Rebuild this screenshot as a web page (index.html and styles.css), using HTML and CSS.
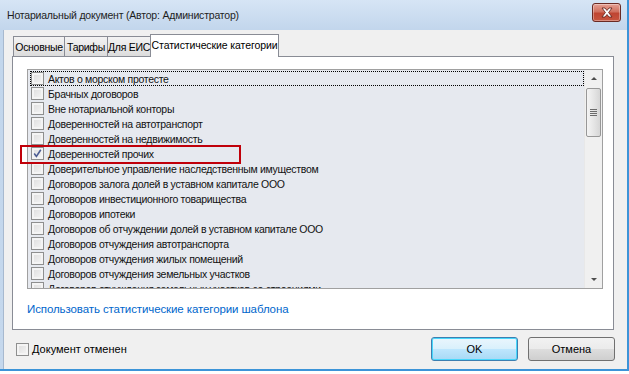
FILE: index.html
```html
<!DOCTYPE html>
<html lang="ru">
<head>
  <meta charset="UTF-8" />
  <title>Нотариальный документ</title>
  <link rel="stylesheet" href="styles.css">
</head>
<body>
  <div class="window">
    <div class="titlebar">
      <div class="title">Нотариальный документ (Автор: Администратор)</div>
      <div class="close-btn">
        <svg width="14" height="11" viewBox="0 0 14 11">
          <path d="M2 1 L5 1 L7 3.5 L9 1 L12 1 L8.6 5.5 L12 10 L9 10 L7 7.5 L5 10 L2 10 L5.4 5.5 Z" fill="#fff" stroke="#5a1a14" stroke-width="0.8"/>
        </svg>
      </div>
    </div>

    <div class="client">
      <div class="tabs">
        <div class="tab" style="width:52px">Основные</div>
        <div class="tab" style="width:44px">Тарифы</div>
        <div class="tab" style="width:44px">Для ЕИС</div>
        <div class="tab active">Статистические категории</div>
      </div>

      <div class="panel">
        <div class="list">
          <div class="items" id="items"></div>
          <div class="scrollbar">
            <div class="sb-arrow up"></div>
            <div class="sb-track">
              <div class="sb-thumb">
                <span></span><span></span><span></span><span></span>
              </div>
            </div>
            <div class="sb-arrow down"></div>
          </div>
        </div>
        <a class="link" href="#">Использовать статистические категории шаблона</a>
      </div>

      <div class="footer">
        <label class="footer-check"><span class="cb"></span>Документ отменен</label>
        <div class="buttons">
          <button class="btn default">OK</button>
          <button class="btn">Отмена</button>
        </div>
      </div>
    </div>

    <div class="highlight"></div>
  </div>

  <script>
    const categories = [
      "Актов о морском протесте",
      "Брачных договоров",
      "Вне нотариальной конторы",
      "Доверенностей на автотранспорт",
      "Доверенностей на недвижимость",
      "Доверенностей прочих",
      "Доверительное управление наследственным имуществом",
      "Договоров залога долей в уставном капитале ООО",
      "Договоров инвестиционного товарищества",
      "Договоров ипотеки",
      "Договоров об отчуждении долей в уставном капитале ООО",
      "Договоров отчуждения автотранспорта",
      "Договоров отчуждения жилых помещений",
      "Договоров отчуждения земельных участков",
      "Договоров отчуждения земельных участков со строениями"
    ];
    const checkMark = '<svg width="9" height="9" viewBox="0 0 9 9"><path d="M1.2 4.6 L3.4 7.4 L7.8 0.8" fill="none" stroke="#4b5c92" stroke-width="1.6"/></svg>';
    const list = document.getElementById("items");
    categories.forEach((name, i) => {
      const row = document.createElement("div");
      row.className = "item" + (i === 0 ? " focused" : "");
      const checked = i === 5;
      row.innerHTML = `<span class="cb">${checked ? checkMark : ""}</span><span class="item-text">${name}</span>`;
      list.appendChild(row);
    });
  </script>
</body>
</html>
```

FILE: styles.css
```css
body {
  margin: 0;
  width: 629px;
  height: 374px;
  overflow: hidden;
  background: #ffffff;
  font-family: "Liberation Sans", "DejaVu Sans", sans-serif;
  font-size: 11px;
  color: #000;
}

.window {
  position: relative;
  width: 629px;
  height: 371px;
  display: flex;
  flex-direction: column;
  background: linear-gradient(#d6e5f5, #c2d6ec 30px, #c5d8ed);
  border-right: 2px solid #3c94d8;
  border-bottom: 2px solid #3c94d8;
  box-sizing: border-box;
}

.titlebar {
  height: 30px;
  display: flex;
  align-items: center;
  justify-content: space-between;
  padding: 0 6px 0 7px;
  flex-shrink: 0;
}

.title {
  font-size: 10.5px;
  letter-spacing: -0.2px;
  color: #1e1e1e;
  margin-top: -1px;
  white-space: nowrap;
}

.close-btn {
  width: 27px;
  height: 17px;
  margin-top: -5px;
  border: 1px solid #6a2a24;
  border-radius: 3px;
  background: linear-gradient(#e6a195, #d0705f 45%, #bf4532 55%, #c7553f);
  display: flex;
  align-items: center;
  justify-content: center;
  box-shadow: inset 0 0 0 1px rgba(255, 255, 255, 0.35);
}

.client {
  flex: 1;
  margin: 0 0 0 3px;
  background: #f0f0f0;
  border-left: 1px solid #a7b9cf;
  display: flex;
  flex-direction: column;
  padding: 4px 0 0 8px;
}

.tabs {
  display: flex;
  align-items: flex-end;
  height: 22px;
  padding-left: 1px;
  position: relative;
  z-index: 1;
}

.tab {
  height: 20px;
  box-sizing: border-box;
  border: 1px solid #898c95;
  border-bottom: none;
  margin-right: -1px;
  background: linear-gradient(#f3f3f3, #e8e8e8 50%, #dcdcdc);
  display: flex;
  align-items: center;
  justify-content: center;
  font-size: 10.5px;
  letter-spacing: -0.3px;
  white-space: nowrap;
  color: #000;
  padding-top: 1px;
}

.tab.active {
  height: 23px;
  width: 129px;
  margin-bottom: -1px;
  background: #ffffff;
  align-items: flex-start;
  padding-top: 4px;
  letter-spacing: -0.1px;
}

.panel {
  width: 602px;
  height: 274px;
  box-sizing: border-box;
  border: 1px solid #898c95;
  background: #ffffff;
  padding: 12px 10px 0 14px;
}

.list {
  height: 220px;
  box-sizing: border-box;
  border: 1px solid #a0a0a0;
  background: #e6e9ef;
  display: flex;
  overflow: hidden;
}

.items {
  flex: 1;
  padding: 1px 0 0 1px;
  overflow: hidden;
}

.item {
  height: 15px;
  display: flex;
  align-items: center;
  box-sizing: border-box;
  margin-left: 1px;
  padding-left: 1px;
  font-size: 10.5px;
  letter-spacing: -0.3px;
  white-space: nowrap;
  color: #111;
}

.item.focused {
  outline: 1px dotted #000;
  outline-offset: -1px;
}

.cb {
  width: 13px;
  height: 13px;
  box-sizing: border-box;
  border: 1px solid #8e8f8f;
  background: linear-gradient(135deg, #dcdcdc, #f6f6f6);
  box-shadow: inset 0 0 0 2px #f4f4f4;
  display: inline-flex;
  align-items: center;
  justify-content: center;
  flex-shrink: 0;
}

.item-text {
  margin-left: 4px;
}

.scrollbar {
  width: 17px;
  display: flex;
  flex-direction: column;
  background: #f0f0f0;
  border-left: 1px solid #e8e8e8;
}

.sb-arrow {
  height: 17px;
  display: flex;
  align-items: center;
  justify-content: center;
}

.sb-arrow::before {
  content: "";
  border-left: 3px solid transparent;
  border-right: 3px solid transparent;
}

.sb-arrow.up::before {
  border-bottom: 3px solid #4d4d4d;
}

.sb-arrow.down::before {
  border-top: 3px solid #4d4d4d;
}

.sb-track {
  flex: 1;
  padding: 1px 1px;
}

.sb-thumb {
  height: 49px;
  box-sizing: border-box;
  border: 1px solid #979797;
  border-radius: 2px;
  background: linear-gradient(90deg, #f4f4f4, #e6e6e6 50%, #d6d6d6);
  display: flex;
  flex-direction: column;
  align-items: center;
  justify-content: center;
  gap: 1px;
}

.sb-thumb span {
  width: 7px;
  height: 1px;
  background: #6b6b6b;
}

.link {
  display: block;
  margin-top: 14px;
  color: #0066cc;
  text-decoration: none;
  font-size: 11.5px;
  letter-spacing: -0.1px;
}

.footer {
  flex: 1;
  display: flex;
  align-items: center;
  justify-content: space-between;
  padding: 0 12px 1px 4px;
}

.footer-check {
  display: flex;
  align-items: center;
  gap: 3px;
  font-size: 11px;
}

.buttons {
  display: flex;
  gap: 10px;
}

.btn {
  width: 87px;
  height: 24px;
  box-sizing: border-box;
  border: 1px solid #707070;
  border-radius: 3px;
  background: linear-gradient(#f2f2f2, #ebebeb 50%, #dddddd 51%, #cfcfcf);
  font-family: "Liberation Sans", sans-serif;
  font-size: 11px;
  color: #000;
  padding: 0;
}

.btn.default {
  border-color: #3c7fb1;
  box-shadow: inset 0 0 0 1px #48d7fb;
  background: linear-gradient(#eaf6fd, #d9f0fc 50%, #bee6fd 51%, #a7d9f5);
}

.highlight {
  position: absolute;
  left: 20px;
  top: 145px;
  width: 221px;
  height: 19px;
  box-sizing: border-box;
  border: 2px solid #c0000a;
  pointer-events: none;
}
```
